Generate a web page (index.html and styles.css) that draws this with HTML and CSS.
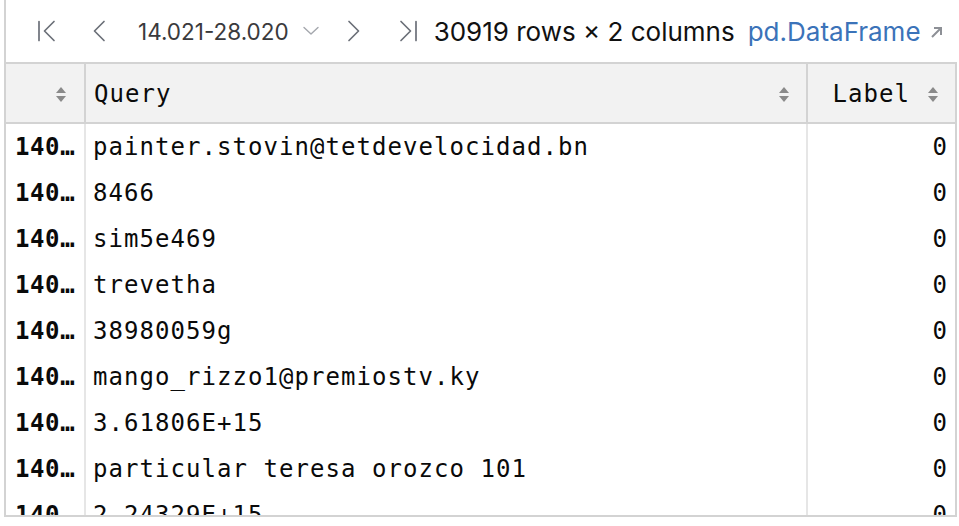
FILE: index.html
```html
<!DOCTYPE html>
<html>
<head>
<meta charset="utf-8">
<link rel="stylesheet" href="styles.css">
</head>
<body>
<div class="frame">
  <div class="toolbar">
    <svg class="ic ic-first" width="24" height="24" viewBox="0 0 24 24"><path d="M4 2.5v19M19 2.5L9.5 12L19 21.5" /></svg>
    <svg class="ic ic-prev" width="24" height="24" viewBox="0 0 24 24"><path d="M17 2.5L7.5 12L17 21.5" /></svg>
    <span class="pages">14.021-28.020</span>
    <svg class="ic ic-drop" width="24" height="24" viewBox="0 0 24 24"><path d="M5 8.5L12 15L19 8.5" /></svg>
    <svg class="ic ic-next" width="24" height="24" viewBox="0 0 24 24"><path d="M7 2.5L16.5 12L7 21.5" /></svg>
    <svg class="ic ic-last" width="24" height="24" viewBox="0 0 24 24"><path d="M5 2.5L14.5 12L5 21.5M20 2.5v19" /></svg>
    <span class="count">30919 rows × 2 columns</span>
    <span class="type">pd.DataFrame</span>
    <svg class="ic-arrow" width="16" height="16" viewBox="0 0 16 16"><path d="M3 13L11.5 4.5M5 4h7v7" /></svg>
  </div>
  <div class="grid">
    <div class="hcell idx"><span class="sort"></span></div>
    <div class="hcell query"><span class="hname">Query</span><span class="sort"></span></div>
    <div class="hcell label"><span class="hname">Label</span><span class="sort"></span></div>

    <div class="cell idx">140…</div><div class="cell query">painter.stovin@tetdevelocidad.bn</div><div class="cell label">0</div>
    <div class="cell idx">140…</div><div class="cell query">8466</div><div class="cell label">0</div>
    <div class="cell idx">140…</div><div class="cell query">sim5e469</div><div class="cell label">0</div>
    <div class="cell idx">140…</div><div class="cell query">trevetha</div><div class="cell label">0</div>
    <div class="cell idx">140…</div><div class="cell query">38980059g</div><div class="cell label">0</div>
    <div class="cell idx">140…</div><div class="cell query">mango_rizzo1@premiostv.ky</div><div class="cell label">0</div>
    <div class="cell idx">140…</div><div class="cell query">3.61806E+15</div><div class="cell label">0</div>
    <div class="cell idx">140…</div><div class="cell query">particular teresa orozco 101</div><div class="cell label">0</div>
    <div class="cell idx">140…</div><div class="cell query">2.24329E+15</div><div class="cell label">0</div>
  </div>
</div>
</body>
</html>
```
FILE: styles.css
```css
html, body {
  margin: 0;
  padding: 0;
  background: #ffffff;
}
.frame {
  margin-left: 4px;
  width: 953px;
  height: 517px;
  box-sizing: border-box;
  border-left: 2px solid #d3d3d3;
  border-bottom: 2px solid #d3d3d3;
  overflow: hidden;
  background: #fff;
}
.toolbar {
  height: 62px;
  border-bottom: 2px solid #d3d3d3;
  display: flex;
  align-items: center;
  font-family: Inter, "Noto Sans", sans-serif;
  font-size: 26px;
  padding-left: 29px;
}
.ic path {
  fill: none;
  stroke: #6c7079;
  stroke-width: 1.7;
  stroke-linecap: round;
  stroke-linejoin: round;
}
.ic-first { margin-right: 28px; }
.ic-prev { margin-right: 27px; }
.pages {
  color: #3a3a3c;
  font-size: 22.5px;
}
.ic-drop { margin-left: 10px; margin-right: 19px; }
.ic-drop path { stroke: #a4a7ad; stroke-width: 1.4; }
.ic-next { margin-right: 30px; }
.ic-last { margin-right: 14px; }
.count {
  color: #111111;
}
.type {
  margin-left: 13px;
  color: #3b73b9;
}
.ic-arrow { margin-left: 8px; margin-top: 2px; }
.ic-arrow path {
  fill: none;
  stroke: #8d9096;
  stroke-width: 2;
}
.grid {
  display: grid;
  grid-template-columns: 80px 722px 149px;
  grid-template-rows: 60px;
  grid-auto-rows: 46px;
  font-family: "DejaVu Sans Mono", "Liberation Mono", monospace;
  font-size: 24px;
  letter-spacing: 1.05px;
  color: #0a0a0a;
}
.hcell {
  background: #f2f2f2;
  border-bottom: 2px solid #d3d3d3;
  border-right: 2px solid #d3d3d3;
  display: flex;
  align-items: center;
  box-sizing: border-box;
}
.hcell.idx { justify-content: flex-end; padding-right: 18px; }
.hcell.query { justify-content: space-between; padding-left: 8px; padding-right: 17px; }
.hcell.label { justify-content: flex-end; padding-right: 17px; }
.hcell.label .hname { margin-right: 18px; }
.hname { padding-top: 2px; }
.sort {
  display: inline-block;
  width: 10px;
  height: 15px;
  position: relative;
  margin-top: 2px;
}
.sort::before, .sort::after {
  content: "";
  position: absolute;
  left: 0;
  border-left: 5px solid transparent;
  border-right: 5px solid transparent;
}
.sort::before { top: 0; border-bottom: 6px solid #8a8a8a; }
.sort::after { bottom: 0; border-top: 6px solid #8a8a8a; }
.cell {
  display: flex;
  align-items: center;
  box-sizing: border-box;
  border-right: 2px solid #e6e6e6;
  white-space: nowrap;
  overflow: hidden;
}
.cell.idx {
  font-weight: bold;
  padding-left: 9px;
  letter-spacing: 0.6px;
}
.cell.query { padding-left: 7px; }
.cell.label {
  justify-content: flex-end;
  padding-right: 7px;
  border-right: 2px solid #d3d3d3;
}
.hcell.label { border-right: 2px solid #d3d3d3; }
```
